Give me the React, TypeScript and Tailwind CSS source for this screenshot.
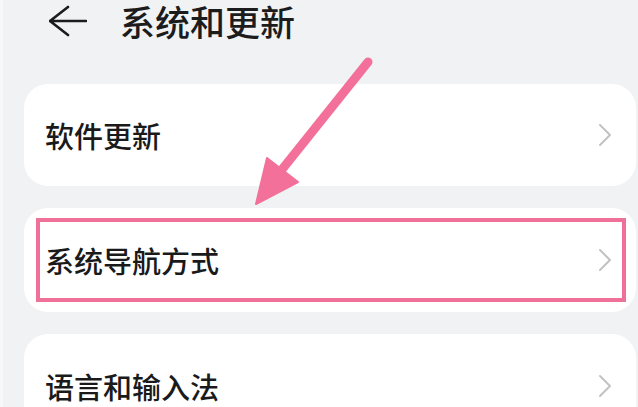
import type { ReactNode } from 'react';

const FONT = { fontFamily: '"Noto Sans CJK SC", "Noto Sans", sans-serif' };

function Chevron() {
  return (
    <svg width="14" height="24" viewBox="0 0 14 24" fill="none" className="shrink-0">
      <polyline points="2,2 12,12 2,22" stroke="#c2c2c2" strokeWidth="2" strokeLinecap="round" strokeLinejoin="round" />
    </svg>
  );
}

function Row({ label, children, className = '' }: { label: string; children?: ReactNode; className?: string }) {
  return (
    <div className={`relative flex items-center justify-between rounded-[24px] bg-white pl-[21px] pr-[24px] ${className}`}>
      <span className="text-[29px] font-medium leading-tight text-[#1a1a1a]">{label}</span>
      <Chevron />
      {children}
    </div>
  );
}

export default function App() {
  return (
    <div className="relative h-[407px] w-[638px] overflow-hidden bg-[#f1f2f4]" style={FONT}>
      <div className="absolute inset-y-0 left-0 w-[3px] bg-[#f7f8f9]" />

      {/* header */}
      <div className="flex h-[42px] items-center pl-[49px]">
        <svg width="38" height="32" viewBox="0 0 38 32" fill="none" className="shrink-0">
          <path d="M19 2 L1 16 L19 30 M1 16 H37" stroke="#1c1c1c" strokeWidth="2.6" strokeLinecap="round" strokeLinejoin="round" />
        </svg>
        <h1 className="ml-[33px] text-[35px] font-medium leading-[42px] text-[#1c1c1c]">系统和更新</h1>
      </div>

      {/* list */}
      <div className="mt-[42px] flex flex-col gap-[22px] pl-[24px] pr-[2px]">
        <Row label="软件更新" className="h-[102px]" />
        <Row label="系统导航方式" className="h-[104px]">
          <div className="pointer-events-none absolute left-[12px] top-[10px] h-[84px] w-[590px] border-[4px] border-[#ef7099]" />
        </Row>
        <Row label="语言和输入法" className="h-[104px]" />
      </div>

      {/* pointer arrow */}
      <svg className="pointer-events-none absolute left-0 top-0" width="638" height="407" viewBox="0 0 638 407" fill="none">
        <line x1="368" y1="62" x2="280" y2="172" stroke="#f2709a" strokeWidth="9" strokeLinecap="round" />
        <polygon points="256,204 267,158 298,182" fill="#f2709a" stroke="#f2709a" strokeWidth="2" strokeLinejoin="round" />
      </svg>
    </div>
  );
}
